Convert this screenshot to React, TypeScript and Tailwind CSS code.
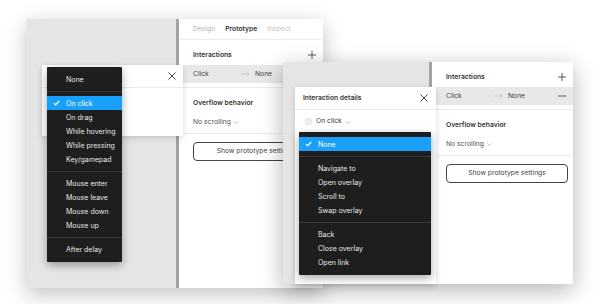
import React from 'react';

const FONT = "font-['Inter','Noto_Sans',sans-serif]";

type Item = { label: string; checked?: boolean } | 'sep';

const TRIGGERS: Item[] = [
    { label: 'None' },
    'sep',
    { label: 'On click', checked: true },
    { label: 'On drag' },
    { label: 'While hovering' },
    { label: 'While pressing' },
    { label: 'Key/gamepad' },
    'sep',
    { label: 'Mouse enter' },
    { label: 'Mouse leave' },
    { label: 'Mouse down' },
    { label: 'Mouse up' },
    'sep',
    { label: 'After delay' },
];

const ACTIONS: Item[] = [
    { label: 'None', checked: true },
    'sep',
    { label: 'Navigate to' },
    { label: 'Open overlay' },
    { label: 'Scroll to' },
    { label: 'Swap overlay' },
    'sep',
    { label: 'Back' },
    { label: 'Close overlay' },
    { label: 'Open link' },
];

function Check() {
    return (
        <svg width="7" height="6" viewBox="0 0 7 6" className="absolute left-[6px] top-[4px]">
            <path d="M0.8 3.1 L2.6 4.9 L6.2 1" stroke="white" strokeWidth="1.3" fill="none" />
        </svg>
    );
}

function Menu({ items }: { items: Item[] }) {
    return (
        <div className="bg-[#1e1e1e] pt-[5px] pb-[6px] shadow-[0_3px_8px_rgba(0,0,0,0.35)] rounded-[1px]">
            {items.map((it, i) =>
                it === 'sep' ? (
                    <div key={i} className="h-[10px] flex items-center">
                        <div className="h-px w-full bg-[#3a3a3a]" />
                    </div>
                ) : (
                    <div
                        key={i}
                        className={
                            'relative h-[14px] pl-[19px] flex items-center text-[7px] leading-none text-[#e6e6e6] ' +
                            (it.checked ? 'bg-[#18a0fb] text-white' : '')
                        }
                    >
                        {it.checked && <Check />}
                        {it.label}
                    </div>
                )
            )}
        </div>
    );
}

function Close() {
    return (
        <svg width="8" height="8" viewBox="0 0 8 8">
            <path d="M0.5 0.5 L7.5 7.5 M7.5 0.5 L0.5 7.5" stroke="#333" strokeWidth="0.9" />
        </svg>
    );
}

function Chevron() {
    return (
        <svg width="5" height="3" viewBox="0 0 5 3" className="ml-[3px] mt-[1px]">
            <path d="M0.3 0.3 L2.5 2.5 L4.7 0.3" stroke="#b3b3b3" strokeWidth="0.7" fill="none" />
        </svg>
    );
}

function Arrow() {
    return (
        <svg width="9" height="6" viewBox="0 0 9 6">
            <path d="M0 3 H8 M5.5 0.5 L8 3 L5.5 5.5" stroke="#c4c4c4" strokeWidth="0.8" fill="none" />
        </svg>
    );
}

function Plus() {
    return (
        <svg width="8" height="8" viewBox="0 0 8 8">
            <path d="M4 0 V8 M0 4 H8" stroke="#333" strokeWidth="0.8" />
        </svg>
    );
}

function Minus() {
    return (
        <svg width="8" height="8" viewBox="0 0 8 8">
            <path d="M0 4 H8" stroke="#333" strokeWidth="0.8" />
        </svg>
    );
}

function PrototypePanel({ tabs, minus }: { tabs?: boolean; minus?: boolean }) {
    return (
        <div className="flex-1 bg-white flex flex-col text-[#333] text-[6.75px] leading-none">
            {tabs && (
                <div className="h-[21px] border-b border-[#ebebeb] flex items-center gap-[10px] pl-[14px]">
                    <span className="text-[#b3b3b3]">Design</span>
                    <span className="font-semibold">Prototype</span>
                    <span className="text-[#c4c4c4]">Inspect</span>
                </div>
            )}
            <div className="h-[25px] flex items-center justify-between pl-[14px] pr-[7px] pt-[5px]">
                <span className="font-semibold">Interactions</span>
                <Plus />
            </div>
            <div className="h-[18px] bg-[#e8e8e8] flex items-center pl-[14px] pr-[7px] text-[#444]">
                <span className="w-[48px]">Click</span>
                <span className="w-[14px] flex"><Arrow /></span>
                <span className="flex-1">None</span>
                {minus && <Minus />}
            </div>
            <div className="h-[5px] border-b border-[#ebebeb]" />
            <div className="h-[46px] border-b border-[#ebebeb] pl-[14px] flex flex-col pt-[12px]">
                <span className="font-semibold">Overflow behavior</span>
                <span className="mt-[12px] flex items-center text-[#555]">No scrolling<Chevron /></span>
            </div>
            <div className="pl-[14px] pr-[5px] pt-[8px]">
                <div className="h-[19px] border border-[#444] rounded-[4px] flex items-center justify-center whitespace-nowrap text-[#444]">
                    Show prototype settings
                </div>
            </div>
        </div>
    );
}

function ClockIcon() {
    return (
        <svg width="7" height="7" viewBox="0 0 7 7">
            <circle cx="3.5" cy="3.5" r="2.8" stroke="#b3b3b3" strokeWidth="0.6" fill="none" />
            <path d="M3.5 1.8 V3.6 H4.8" stroke="#b3b3b3" strokeWidth="0.6" fill="none" />
        </svg>
    );
}

export default function App() {
    return (
        <div className={`relative w-[600px] h-[304px] bg-white overflow-hidden ${FONT}`}>
            {/* back window */}
            <div className="absolute left-[27px] top-[19px] w-[296px] h-[269px] flex shadow-[0_6px_20px_rgba(0,0,0,0.25)]">
                <div className="w-[149px] bg-[#e5e5e5]" />
                <div className="w-[3px] bg-[#a3a3a3]" />
                <PrototypePanel tabs />

                <div className="absolute left-[15px] top-[46px] w-[141px] h-[71px] bg-white shadow-[0_2px_6px_rgba(0,0,0,0.15)]">
                    <div className="h-[23px] border-b border-[#ebebeb] flex items-center justify-end pr-[7px]">
                        <Close />
                    </div>
                </div>

                <div className="absolute left-[20px] top-[48px] w-[75px]">
                    <Menu items={TRIGGERS} />
                </div>
            </div>

            {/* front window */}
            <div className="absolute left-[283px] top-[62px] w-[290px] h-[222px] flex shadow-[0_6px_22px_rgba(0,0,0,0.3)]">
                <div className="w-[146px] bg-[#e5e5e5]" />
                <div className="w-[3px] bg-[#a3a3a3]" />
                <PrototypePanel minus />

                <div className="absolute left-[12px] top-[25px] w-[141px] bottom-0 bg-white shadow-[0_2px_6px_rgba(0,0,0,0.15)] text-[#333] text-[6.75px] leading-none">
                    <div className="h-[23px] border-b border-[#ebebeb] flex items-center justify-between pl-[8px] pr-[8px]">
                        <span className="font-semibold">Interaction details</span>
                        <Close />
                    </div>
                    <div className="h-[23px] flex items-center pl-[10px] gap-[4px]">
                        <ClockIcon />
                        <span className="flex items-center">On click<Chevron /></span>
                    </div>
                </div>

                <div className="absolute left-[16px] top-[70px] w-[132px]">
                    <Menu items={ACTIONS} />
                </div>
            </div>
        </div>
    );
}
